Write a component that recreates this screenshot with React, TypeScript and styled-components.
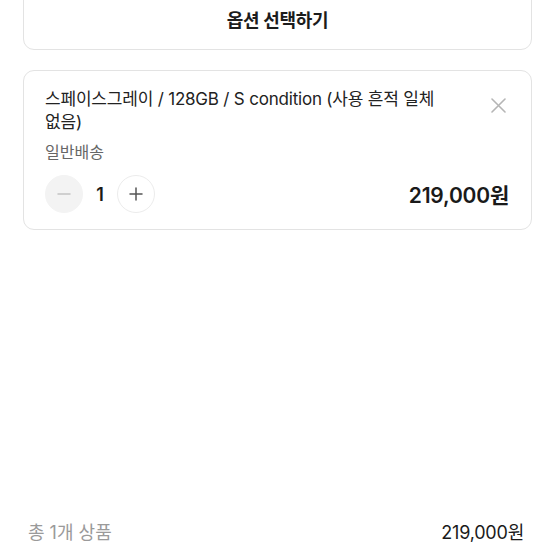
import React from "react";
import styled, { createGlobalStyle } from "styled-components";

const Global = createGlobalStyle`
  html, body { margin: 0; padding: 0; background: #ffffff; overflow: hidden; }
  body { font-family: "Inter", "Noto Sans CJK KR", sans-serif; color: #1f1f1f; }
  * { box-sizing: border-box; }
`;

const Page = styled.div`
  width: 555px;
  height: 555px;
  display: flex;
  flex-direction: column;
  padding: 0 23px 0 23px;
`;

const SelectButton = styled.button`
  margin-top: -12px;
  height: 62px;
  width: 100%;
  padding: 0;
  border: 1px solid #e3e3e3;
  border-radius: 11px;
  background: #fff;
  font-family: inherit;
  font-size: 18px;
  font-weight: 700;
  color: #1c1c1c;
  letter-spacing: -0.3px;
`;

const Card = styled.div`
  margin-top: 20px;
  border: 1px solid #e3e3e3;
  border-radius: 11px;
  padding: 17px 21px 16px 21px;
  display: flex;
  flex-direction: column;
  position: relative;
`;

const TitleRow = styled.div`
  display: flex;
  align-items: flex-start;
  justify-content: space-between;
`;

const Title = styled.div`
  font-size: 17px;
  line-height: 23px;
  color: #222;
  width: 405px;
  letter-spacing: -0.2px;
  word-break: keep-all;
`;

const CloseBtn = styled.div`
  width: 20px;
  height: 20px;
  margin-top: 7px;
  margin-right: 2px;
  display: flex;
  align-items: center;
  justify-content: center;
`;

const Shipping = styled.div`
  margin-top: 8px;
  font-size: 16px;
  color: #666;
  line-height: 20px;
`;

const BottomRow = styled.div`
  margin-top: 13px;
  display: flex;
  align-items: center;
  justify-content: space-between;
`;

const Stepper = styled.div`
  display: flex;
  align-items: center;
`;

const StepBtn = styled.div<{ $disabled?: boolean }>`
  width: 38px;
  height: 38px;
  border-radius: 50%;
  display: flex;
  align-items: center;
  justify-content: center;
  background: ${(p) => (p.$disabled ? "#f3f3f3" : "#fff")};
  border: 1px solid ${(p) => (p.$disabled ? "#f3f3f3" : "#ececec")};
`;

const Qty = styled.div`
  width: 34px;
  text-align: center;
  font-size: 18px;
  font-weight: 600;
  color: #1a1a1a;
`;

const Price = styled.div`
  font-size: 21px;
  font-weight: 600;
  color: #1a1a1a;
  letter-spacing: -0.2px;
  margin-right: 1px;
`;

const Spacer = styled.div`
  flex: 1;
`;

const TotalRow = styled.div`
  display: flex;
  align-items: center;
  justify-content: space-between;
  padding: 0 8px 0 5px;
  margin-bottom: 11px;
`;

const TotalLabel = styled.div`
  font-size: 18px;
  color: #9a9a9a;
`;

const TotalPrice = styled.div`
  font-size: 18px;
  color: #1a1a1a;
  letter-spacing: -0.2px;
`;

export default function App() {
  return (
    <>
      <Global />
      <Page>
        <SelectButton>옵션 선택하기</SelectButton>
        <Card>
          <TitleRow>
            <Title>스페이스그레이 / 128GB / S condition (사용 흔적 일체 없음)</Title>
            <CloseBtn>
              <svg width="15" height="15" viewBox="0 0 15 15">
                <path d="M1 1 L14 14 M14 1 L1 14" stroke="#b5b5b5" strokeWidth="1.6" strokeLinecap="round" />
              </svg>
            </CloseBtn>
          </TitleRow>
          <Shipping>일반배송</Shipping>
          <BottomRow>
            <Stepper>
              <StepBtn $disabled>
                <svg width="14" height="14" viewBox="0 0 14 14">
                  <path d="M1 7 H13" stroke="#c4c4c4" strokeWidth="1.5" strokeLinecap="round" />
                </svg>
              </StepBtn>
              <Qty>1</Qty>
              <StepBtn>
                <svg width="14" height="14" viewBox="0 0 14 14">
                  <path d="M1 7 H13 M7 1 V13" stroke="#555" strokeWidth="1.5" strokeLinecap="round" />
                </svg>
              </StepBtn>
            </Stepper>
            <Price>219,000원</Price>
          </BottomRow>
        </Card>
        <Spacer />
        <TotalRow>
          <TotalLabel>총 1개 상품</TotalLabel>
          <TotalPrice>219,000원</TotalPrice>
        </TotalRow>
      </Page>
    </>
  );
}
